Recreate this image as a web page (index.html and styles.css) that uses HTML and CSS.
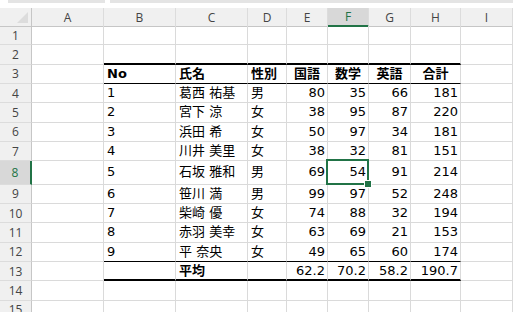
FILE: index.html
```html
<!DOCTYPE html>
<html lang="ja">
<head>
    <meta charset="UTF-8">
    <meta name="viewport" content="width=device-width, initial-scale=1.0">
    <title>成績表</title>
    <link rel="stylesheet" href="styles.css">
</head>
<body>
    <!-- 上部のバー -->
    <div class="toolbar">
        <span class="bar name-box"></span>
        <span class="bar formula-box"></span>
    </div>

    <div class="sheet">
        <!-- 列見出し -->
        <div class="row head">
            <div class="corner"></div>
            <div class="col">A</div>
            <div class="col">B</div>
            <div class="col">C</div>
            <div class="col">D</div>
            <div class="col">E</div>
            <div class="col active">F</div>
            <div class="col">G</div>
            <div class="col">H</div>
            <div class="col">I</div>
        </div>

        <div class="row">
            <div class="rh">1</div>
            <div class="c"></div><div class="c"></div><div class="c"></div><div class="c"></div><div class="c"></div><div class="c"></div><div class="c"></div><div class="c"></div><div class="c"></div>
        </div>
        <div class="row">
            <div class="rh">2</div>
            <div class="c"></div>
            <div class="c thick"></div><div class="c thick"></div><div class="c thick"></div><div class="c thick"></div><div class="c thick"></div><div class="c thick"></div><div class="c thick"></div>
            <div class="c"></div>
        </div>

        <!-- 表の見出し行 -->
        <div class="row">
            <div class="rh">3</div>
            <div class="c"></div>
            <div class="c b line">No</div>
            <div class="c b line">氏名</div>
            <div class="c b line">性別</div>
            <div class="c b line ctr">国語</div>
            <div class="c b line ctr">数学</div>
            <div class="c b line ctr">英語</div>
            <div class="c b line ctr">合計</div>
            <div class="c"></div>
        </div>

        <div class="row">
            <div class="rh">4</div>
            <div class="c"></div>
            <div class="c">1</div><div class="c">葛西 祐基</div><div class="c">男</div>
            <div class="c num">80</div><div class="c num">35</div><div class="c num">66</div><div class="c num">181</div>
            <div class="c"></div>
        </div>
        <div class="row">
            <div class="rh">5</div>
            <div class="c"></div>
            <div class="c">2</div><div class="c">宮下 涼</div><div class="c">女</div>
            <div class="c num">38</div><div class="c num">95</div><div class="c num">87</div><div class="c num">220</div>
            <div class="c"></div>
        </div>
        <div class="row">
            <div class="rh">6</div>
            <div class="c"></div>
            <div class="c">3</div><div class="c">浜田 希</div><div class="c">女</div>
            <div class="c num">50</div><div class="c num">97</div><div class="c num">34</div><div class="c num">181</div>
            <div class="c"></div>
        </div>
        <div class="row">
            <div class="rh">7</div>
            <div class="c"></div>
            <div class="c">4</div><div class="c">川井 美里</div><div class="c">女</div>
            <div class="c num">38</div><div class="c num">32</div><div class="c num">81</div><div class="c num">151</div>
            <div class="c"></div>
        </div>
        <div class="row tall">
            <div class="rh active">8</div>
            <div class="c"></div>
            <div class="c">5</div><div class="c">石坂 雅和</div><div class="c">男</div>
            <div class="c num">69</div><div class="c num selected">54</div><div class="c num">91</div><div class="c num">214</div>
            <div class="c"></div>
        </div>
        <div class="row">
            <div class="rh">9</div>
            <div class="c"></div>
            <div class="c">6</div><div class="c">笹川 満</div><div class="c">男</div>
            <div class="c num">99</div><div class="c num">97</div><div class="c num">52</div><div class="c num">248</div>
            <div class="c"></div>
        </div>
        <div class="row">
            <div class="rh">10</div>
            <div class="c"></div>
            <div class="c">7</div><div class="c">柴崎 優</div><div class="c">女</div>
            <div class="c num">74</div><div class="c num">88</div><div class="c num">32</div><div class="c num">194</div>
            <div class="c"></div>
        </div>
        <div class="row">
            <div class="rh">11</div>
            <div class="c"></div>
            <div class="c">8</div><div class="c">赤羽 美幸</div><div class="c">女</div>
            <div class="c num">63</div><div class="c num">69</div><div class="c num">21</div><div class="c num">153</div>
            <div class="c"></div>
        </div>
        <div class="row">
            <div class="rh">12</div>
            <div class="c"></div>
            <div class="c line">9</div><div class="c line">平 奈央</div><div class="c line">女</div>
            <div class="c line num">49</div><div class="c line num">65</div><div class="c line num">60</div><div class="c line num">174</div>
            <div class="c"></div>
        </div>

        <!-- 平均 -->
        <div class="row">
            <div class="rh">13</div>
            <div class="c"></div>
            <div class="c thick"></div><div class="c thick b">平均</div><div class="c thick"></div>
            <div class="c thick num">62.2</div><div class="c thick num">70.2</div><div class="c thick num">58.2</div><div class="c thick num">190.7</div>
            <div class="c"></div>
        </div>

        <div class="row">
            <div class="rh">14</div>
            <div class="c"></div><div class="c"></div><div class="c"></div><div class="c"></div><div class="c"></div><div class="c"></div><div class="c"></div><div class="c"></div><div class="c"></div>
        </div>
        <div class="row">
            <div class="rh">15</div>
            <div class="c"></div><div class="c"></div><div class="c"></div><div class="c"></div><div class="c"></div><div class="c"></div><div class="c"></div><div class="c"></div><div class="c"></div>
        </div>
    </div>
</body>
</html>
```

FILE: styles.css
```css
/* 基本 */
* {
    margin: 0;
    padding: 0;
    box-sizing: border-box;
}

body {
    width: 513px;
    height: 312px;
    overflow: hidden;
    background-color: #ffffff;
    font-family: 'DejaVu Sans', 'Noto Sans CJK JP', sans-serif;
    font-size: 13px;
    color: #000000;
}

/* 上部のバー */
.toolbar {
    height: 8px;
    display: flex;
    gap: 5px;
    padding-left: 8px;
}

.bar {
    display: block;
    height: 3px;
    background-color: #e4e4e4;
}

.name-box {
    width: 97px;
}

.formula-box {
    flex: 1;
}

/* シート */
.row {
    display: grid;
    grid-template-columns: 32px 72px 72px 72px 39px 41px 41px 42px 50px 52px;
    height: 19.33px;
}

.row.tall {
    height: 23.33px;
}

.row.head {
    height: 18px;
}

/* 列見出し */
.corner,
.col {
    background-color: #f0f0f0;
    border-bottom: 1px solid #c6c6c6;
}

.corner {
    position: relative;
    border-right: 1px solid #c6c6c6;
}

.corner::after {
    content: "";
    position: absolute;
    right: 3px;
    bottom: 3px;
    border-left: 11px solid transparent;
    border-bottom: 11px solid #dcdcdc;
}

.col {
    display: flex;
    align-items: center;
    justify-content: center;
    border-right: 1px solid #dcdcdc;
    font-family: 'Open Sans', 'Liberation Sans', sans-serif;
    font-size: 12px;
    color: #444444;
}

.col.active {
    background-color: #d8d8d8;
    border-bottom: 2px solid #217346;
    color: #217346;
}

/* 行見出し */
.rh {
    display: flex;
    align-items: center;
    justify-content: center;
    background-color: #f0f0f0;
    border-right: 1px solid #c6c6c6;
    border-bottom: 1px solid #dcdcdc;
    font-family: 'Open Sans', 'Liberation Sans', sans-serif;
    font-size: 12px;
    color: #444444;
}

.rh.active {
    background-color: #d8d8d8;
    border-right: 2px solid #217346;
    color: #217346;
}

/* セル */
.c {
    display: flex;
    align-items: center;
    padding: 0 3px;
    line-height: 14px;
    white-space: nowrap;
    border-right: 1px solid #dadada;
    border-bottom: 1px solid #dadada;
}

.num {
    justify-content: flex-end;
    padding-right: 2px;
}

.ctr {
    justify-content: center;
}

.b {
    font-weight: bold;
}

/* 罫線 */
.line {
    border-bottom-color: #000000;
}

.thick {
    border-bottom: 2px solid #000000;
}

/* 選択セル */
.selected {
    position: relative;
}

.selected::before {
    content: "";
    position: absolute;
    left: -2px;
    top: -2px;
    right: -1px;
    bottom: -1px;
    border: 2px solid #217346;
}

.selected::after {
    content: "";
    position: absolute;
    right: -4px;
    bottom: -4px;
    width: 6px;
    height: 6px;
    background-color: #217346;
    border: 1px solid #ffffff;
}
```
